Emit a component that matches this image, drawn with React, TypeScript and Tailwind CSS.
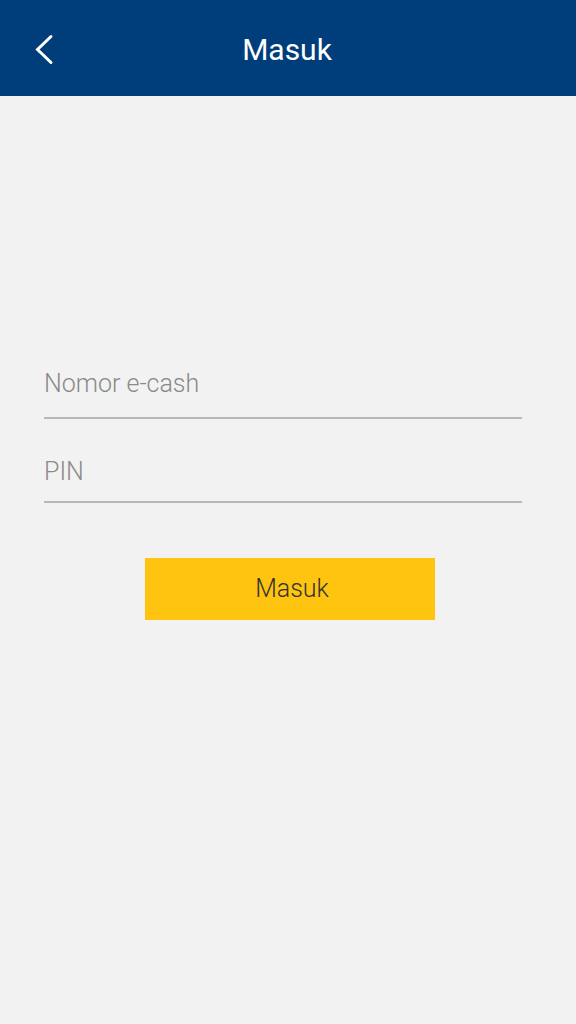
import React from "react";

export default function App() {
  return (
    <div className="min-h-[1024px] w-[576px] bg-[#f2f2f2]" style={{ fontFamily: "Roboto, 'Liberation Sans', sans-serif" }}>
      <header className="relative flex h-[96px] items-center justify-center bg-[#003d7b] pt-[4px]">
        <button className="absolute left-[30px] top-[30px] h-[40px] w-[28px]">
          <svg width="28" height="40" viewBox="0 0 28 40" fill="none">
            <path d="M21 6.5 L7.5 19.5 L21 32.5" stroke="white" strokeWidth="3" strokeLinecap="round" strokeLinejoin="miter" />
          </svg>
        </button>
        <h1 className="pr-[2px] text-[30px] font-normal leading-[30px] text-white">Masuk</h1>
      </header>
      <div className="flex flex-col px-[44px] pt-[273px]">
        <div className="w-[478px] border-b-2 border-[#b8b8b8] pb-[18px]">
          <input
            className="block h-[30px] w-full bg-transparent text-[25px] font-light leading-[30px] text-[#444] placeholder-[#8a8a8a] outline-none"
            placeholder="Nomor e-cash"
          />
        </div>
        <div className="mt-[38px] w-[478px] border-b-2 border-[#b8b8b8] pb-[14px]">
          <input
            type="password"
            className="block h-[30px] w-full bg-transparent text-[25px] font-light leading-[30px] text-[#444] placeholder-[#8a8a8a] outline-none"
            placeholder="PIN"
          />
        </div>
        <button className="ml-[101px] mt-[55px] h-[62px] w-[290px] bg-[#ffc40f] pl-[4px] text-[25px] font-light text-[#333]">Masuk</button>
      </div>
    </div>
  );
}
